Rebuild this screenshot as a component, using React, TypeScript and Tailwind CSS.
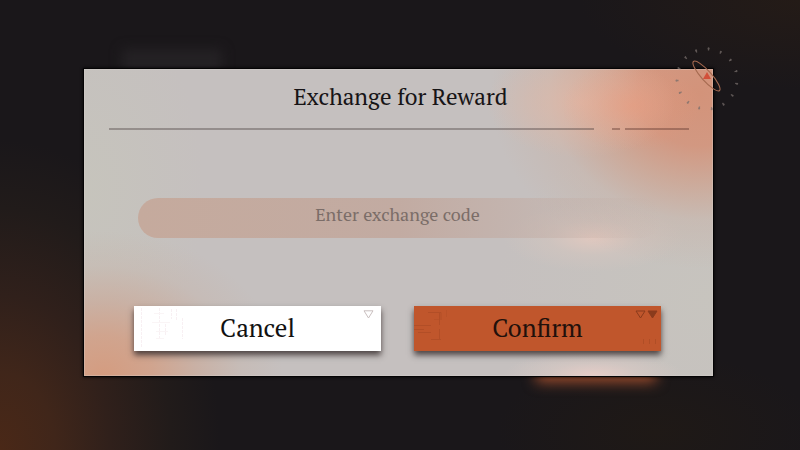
import React, { useState } from 'react'

const TICKS = Array.from({ length: 15 }, (_, i) => i * 24 + 3)

function CompassOrnament() {
  return (
    <svg
      className="pointer-events-none absolute -top-6 -right-7 h-[68px] w-[68px]"
      viewBox="-34 -34 68 68"
      fill="none"
      aria-hidden="true"
    >
      {TICKS.map((angle) => (
        <path
          key={angle}
          d="M-1 -30.500h2M0 -31.500v3"
          stroke="#776d6b"
          strokeWidth="1.3"
          opacity="0.75"
          transform={`rotate(${angle})`}
        />
      ))}
      <ellipse
        cx="-0.5"
        cy="-3"
        rx="19.5"
        ry="5"
        transform="rotate(48 -0.5 -3)"
        stroke="#a66a50"
        strokeWidth="1.1"
      />
      <path d="M0 -7L4 0H-4Z" fill="#d2503a" />
    </svg>
  )
}

function CancelArt() {
  return (
    <svg
      className="absolute top-0 left-0 h-full w-[60px]"
      viewBox="0 0 60 45"
      fill="none"
      aria-hidden="true"
    >
      <path
        d="M7.500 2V42M25.500 2V33M31.500 18V30M37.500 3V13M42.500 3V15M48.500 12V33"
        stroke="#f8f0f3"
        strokeDasharray="3 1"
      />
      <path d="M20 7.500H30M18 16.500H36M22 25.500H34M22 32.500H30" stroke="#faf5f6" />
    </svg>
  )
}

function ConfirmArt() {
  return (
    <svg
      className="absolute top-0 left-0 h-full w-[60px]"
      viewBox="0 0 60 45"
      fill="none"
      stroke="#8f3d1c"
      opacity="0.28"
      aria-hidden="true"
    >
      <path d="M0 19.500H17M4 26.500H17M0 23.500H10M14 6.500H27V14M25.500 7V19M25.500 23V33M17 33.500H27" />
      <path d="M32.500 4V11M20 13.500H26" opacity="0.5" />
    </svg>
  )
}

export default function App() {
  const [code, setCode] = useState('')

  return (
    <main className="relative flex min-h-screen items-center overflow-hidden bg-[#1a171a] bg-[radial-gradient(ellipse_220px_310px_at_0%_100%,#4a2817_0%,#40261a_25%,#30201b_50%,#211b1a_78%,transparent_100%),radial-gradient(ellipse_220px_90px_at_100%_0%,#241b17,transparent),radial-gradient(ellipse_160px_80px_at_82%_96%,#1f1916,transparent)] pr-[87px] pb-1.5 pl-[84px] font-['PT_Serif','Liberation_Serif',serif]">
      <div className="absolute top-[49px] left-[122px] h-6 w-[100px] bg-[#242124] blur-[6px]" />
      <div className="absolute top-[362px] left-[67%] h-[20px] w-[120px] bg-[#a14e2e] blur-[7px]" />

      <section
        className="relative w-full bg-[#c5c0bf] bg-[radial-gradient(ellipse_70px_45px_at_87%_12%,#ee987877,#ee987833_50%,transparent),radial-gradient(ellipse_95px_55px_at_79%_11%,#e6b9a6aa,#e2b9a766_50%,transparent),radial-gradient(ellipse_210px_175px_at_98%_8%,#d3937a_0%,#d3957dee_30%,#cfa08bbb_50%,#cab0a366_72%,transparent_100%),radial-gradient(ellipse_180px_145px_at_3%_100%,#d49c80_0%,#d2a087dd_28%,#cba998aa_52%,#c8b3a755_76%,transparent_100%),radial-gradient(ellipse_90px_34px_at_81%_55%,#e0c8bf,#d4c5be88_50%,transparent),radial-gradient(ellipse_90px_26px_at_81%_100%,#e7cdc7,#dccac588_50%,transparent),radial-gradient(ellipse_220px_190px_at_100%_75%,#c7c4be,transparent),radial-gradient(ellipse_120px_200px_at_0%_40%,#c6c4bc,transparent)] pt-3 pb-[25px] shadow-[inset_0_0_0_1px_#d8d2d055,0_0_0_1px_#050405,0_0_3px_1px_#050405]"
        role="dialog"
        aria-labelledby="exchange-title"
      >
        <h1
          id="exchange-title"
          className="pl-1 text-center text-[23px] leading-8 text-[#171416]"
        >
          Exchange for Reward
        </h1>

        <div className="mt-[15px] mr-6 ml-[25px] flex h-[2px]" aria-hidden="true">
          <span className="flex-1 bg-[#3a2d2d]/35" />
          <span className="ml-[18px] w-2 bg-[#5a332a]/40" />
          <span className="ml-[5px] w-[64px] bg-[#5a332a]/40" />
        </div>

        <form onSubmit={(e) => e.preventDefault()} className="pr-[52px] pl-[50px]">
          <input
            type="text"
            value={code}
            onChange={(e) => setCode(e.target.value)}
            placeholder="Enter exchange code"
            aria-label="Exchange code"
            className="mt-[68px] ml-1 block h-10 w-[calc(100%-4px)] rounded-full bg-linear-to-r from-[#c5aa9d] from-0% via-[#c2aba2] via-50% to-transparent pr-1 pb-2 text-center text-[18px] text-[#5b4f4c] outline-none placeholder:text-[#7b6d68]"
          />

          <div className="mt-[68px] grid grid-cols-2 gap-[33px]">
            <button
              type="button"
              onClick={() => setCode('')}
              className="relative h-[45px] bg-white text-[25px] text-[#111] shadow-[0_4px_6px_#3a3030dd]"
            >
              <CancelArt />
              Cancel
              <svg
                className="absolute top-1 right-[7px] h-[9px] w-[11px]"
                viewBox="0 0 11 9"
                fill="none"
                stroke="#c9bfbf"
                aria-hidden="true"
              >
                <path d="M1 0.800H10L5.500 8Z" />
              </svg>
            </button>
            <button
              type="submit"
              className="relative h-[45px] bg-[#c0562c] text-[25px] text-[#21100b] shadow-[0_4px_6px_#3a3030dd]"
            >
              <ConfirmArt />
              Confirm
              <svg
                className="absolute top-1 right-[3px] h-[38px] w-[23px]"
                viewBox="0 0 23 38"
                fill="none"
                stroke="#8a3b1c"
                aria-hidden="true"
              >
                <path d="M1 1H10L5.500 8Z" />
                <path d="M13 1H22L17.500 8Z" fill="#8a3b1c" />
                <path d="M8.500 29V34M14.500 29V34M20.500 29V34" opacity="0.3" />
              </svg>
            </button>
          </div>
        </form>

        <CompassOrnament />
      </section>
    </main>
  )
}
